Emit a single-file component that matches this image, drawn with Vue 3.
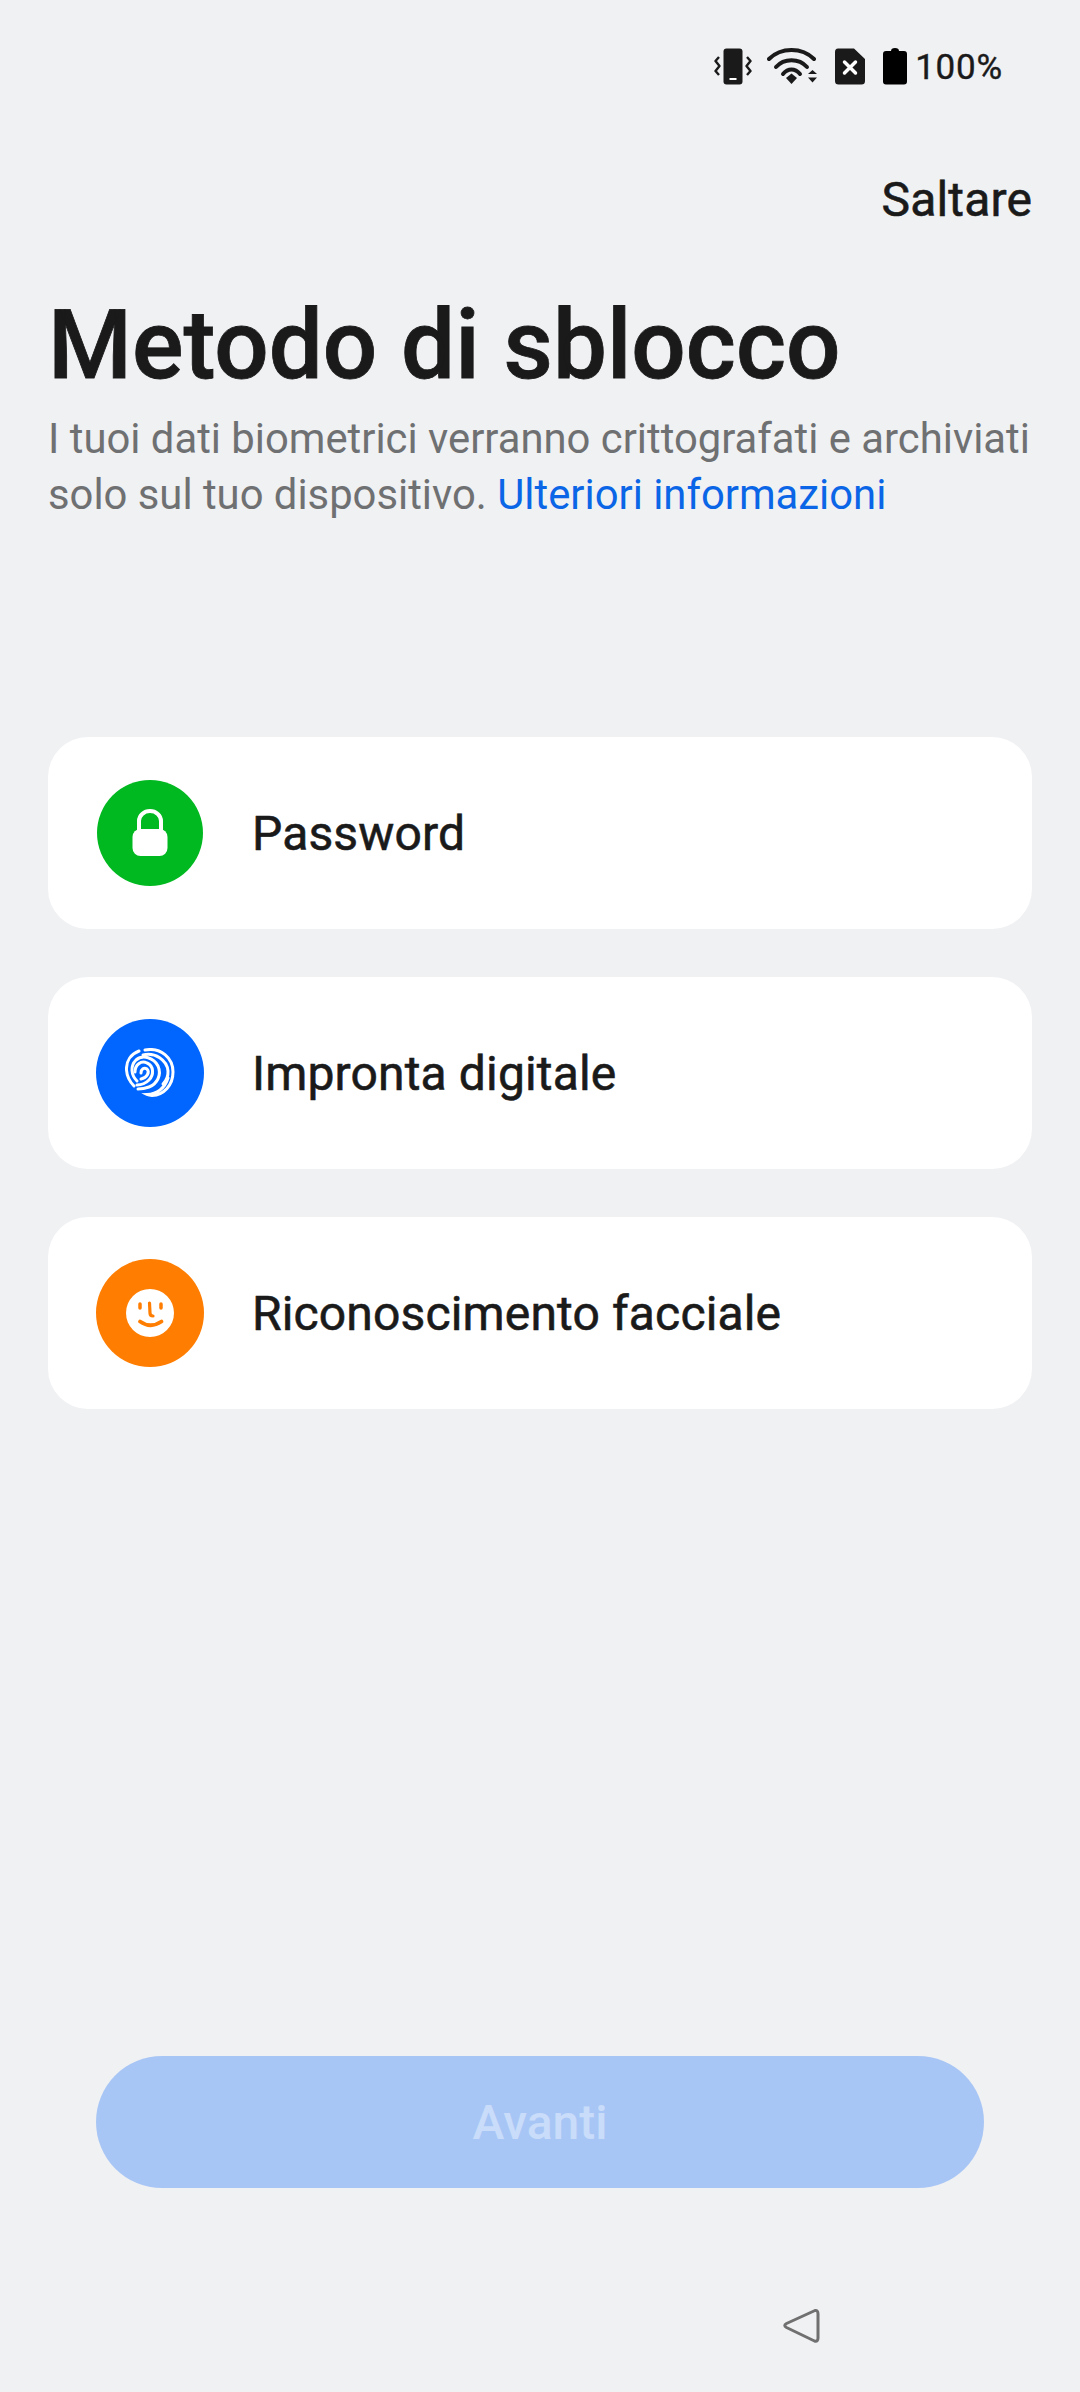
<template>
  <div class="page">
    <div class="status">
      <svg class="st" width="38" height="38" viewBox="0 0 38 38" fill="none">
        <rect x="9.500" y="0.500" width="19" height="36" rx="3" fill="#1a1a1a"/>
        <rect x="15.500" y="30" width="7" height="2" fill="#fff"/>
        <path d="M5 9 L1.500 13 L5.500 18 L1.500 23 L5 27" stroke="#1a1a1a" stroke-width="2.400" stroke-linejoin="round"/>
        <path d="M33 9 L36.500 13 L32.500 18 L36.500 23 L33 27" stroke="#1a1a1a" stroke-width="2.400" stroke-linejoin="round"/>
      </svg>
      <svg class="st" width="52" height="38" viewBox="0 0 52 38" fill="none">
        <path d="M2 11 C14 -1 35 -1 47 11" stroke="#1a1a1a" stroke-width="4" stroke-linecap="round"/>
        <path d="M9 19 C17 10 32 10 40 19" stroke="#1a1a1a" stroke-width="4" stroke-linecap="round"/>
        <path d="M16 26 C21 20 28 20 33 26" stroke="#1a1a1a" stroke-width="4" stroke-linecap="round"/>
        <path d="M19 30 L24.500 25.500 L30 30 L24.500 36 Z" fill="#1a1a1a"/>
        <path d="M41 26 L45.500 22 L50 26 Z M41 29.500 L50 29.500 L45.500 34.500 Z" fill="#1a1a1a"/>
      </svg>
      <svg class="st" width="30" height="38" viewBox="0 0 30 38">
        <path d="M3 0.500 H19 L30 11 V33 a3.500 3.500 0 0 1 -3.500 3.500 H3.500 A3.500 3.500 0 0 1 0 33 V4 A3.500 3.500 0 0 1 3 0.500 Z" fill="#1a1a1a"/>
        <path d="M9.500 14 L20.500 25 M20.500 14 L9.500 25" stroke="#fff" stroke-width="3.500" stroke-linecap="round"/>
      </svg>
      <svg class="st" width="24" height="38" viewBox="0 0 24 38">
        <path d="M8 3 Q8 0 12 0 Q16 0 16 3 H21 a3 3 0 0 1 3 3 V33.500 a3 3 0 0 1 -3 3 H3 a3 3 0 0 1 -3 -3 V6 a3 3 0 0 1 3 -3 Z" fill="#000"/>
      </svg>
      <span class="pct">100%</span>
    </div>
    <div class="skip">Saltare</div>
    <h1 class="title">Metodo di sblocco</h1>
    <p class="desc">I tuoi dati biometrici verranno crittografati e archiviati<br>solo sul tuo dispositivo. <span class="link">Ulteriori informazioni</span></p>

    <div class="list">
      <div class="card">
        <div class="ic green">
          <svg width="36" height="48" viewBox="0 0 36 48" fill="none">
            <path d="M7 24 V12 a11 10 0 0 1 22 0 V24" stroke="#fff" stroke-width="4"/>
            <rect x="0.500" y="20" width="35" height="27" rx="8" fill="#fff"/>
          </svg>
        </div>
        <span>Password</span>
      </div>
      <div class="card">
        <div class="ic blue">
          <svg width="50" height="50" viewBox="0 0 50 50" fill="none" stroke="#fff" stroke-width="3" stroke-linecap="round">
            <path d="M20 2 C36 -1 48 10 48 24 C48 37 39 47 27 47.500 C24.500 47.500 23 47 22 46.500 C32 46 40 40 43 30"/>
            <path d="M14 3 C6 6 1 13 1.500 22 C2 29 5 34 9 38"/>
            <path d="M18 7 C30 4 42 12 43 23 C43.300 28 41 33 38 36"/>
            <path d="M12 33 C6 27 5 18 11 12 C18 6 29 10 33 18 C37 27 32 36 24 39 C20 40.500 16 41 13 41"/>
            <path d="M10 24 C10 17 16 12 22 15 C29 18 29 27 24 32 C21 35 16 37 12 37"/>
            <path d="M16 25 C16 21 19 19 22 21 C25 24 22 30 16 31"/>
          </svg>
        </div>
        <span>Impronta digitale</span>
      </div>
      <div class="card">
        <div class="ic orange">
          <svg width="48" height="48" viewBox="0 0 48 48" fill="none">
            <circle cx="24" cy="24" r="24" fill="#fff"/>
            <g stroke="#ff7d00" stroke-linecap="round">
              <path d="M14 15 V19" stroke-width="3.500"/>
              <path d="M35 15 V19" stroke-width="3.500"/>
              <path d="M23.500 14 L24 24 Q24 27 27 27" stroke-width="3.200"/>
              <path d="M14 32.500 Q24.500 40 35.500 32.500" stroke-width="3.800"/>
            </g>
          </svg>
        </div>
        <span>Riconoscimento facciale</span>
      </div>
    </div>

    <div class="spacer"></div>
    <div class="btn"><span>Avanti</span></div>
    <div class="nav">
      <svg width="38" height="36" viewBox="0 0 38 36" fill="none">
        <path d="M33 2.500 Q36 2 36 6 V30 Q36 34 32.500 33 L4.500 19.500 Q1 17.500 4.500 15.500 Z" stroke="#707070" stroke-width="3" stroke-linejoin="round"/>
      </svg>
    </div>
  </div>
</template>

<script setup>
</script>

<style>
html, body { margin: 0; background: #f0f1f3; }
</style>

<style scoped>
.page {
  width: 1080px;
  height: 2392px;
  background: #f0f1f3;
  font-family: Roboto, "Liberation Sans", sans-serif;
  color: #1a1a1a;
  display: flex;
  flex-direction: column;
  box-sizing: border-box;
  overflow: hidden;
}
.status {
  display: flex;
  justify-content: flex-end;
  align-items: center;
  height: 38px;
  margin-top: 48px;
  padding-right: 77px;
}
.st { flex: none; }
.st:nth-child(1) { margin-right: 15px; }
.st:nth-child(2) { margin-right: 16px; }
.st:nth-child(3) { margin-right: 18px; }
.st:nth-child(4) { margin-right: 8px; }
.pct { font-size: 35px; font-weight: 400; letter-spacing: 0.8px; line-height: 38px; margin-top: 2px; -webkit-text-stroke: 0.4px #1a1a1a; }
.skip {
  align-self: flex-end;
  margin: 87px 48px 0 0;
  font-size: 48px;
  font-weight: 400;
  line-height: 54px;
  letter-spacing: 0.15px;
  -webkit-text-stroke: 0.6px #1a1a1a;
}
.title {
  margin: 60px 0 0 48px;
  font-size: 96px;
  font-weight: 500;
  line-height: 116px;
  -webkit-text-stroke: 0.8px #1a1a1a;
}
.desc {
  margin: 8px 0 0 48px;
  font-size: 41.8px;
  line-height: 56px;
  color: #6f7072;
}
.link { color: #0a66e6; }
.list {
  margin: 214px 48px 0 48px;
  display: flex;
  flex-direction: column;
  gap: 48px;
}
.card {
  height: 192px;
  background: #fff;
  border-radius: 40px;
  display: flex;
  align-items: center;
  padding-left: 48px;
  font-size: 48px;
  font-weight: 400;
  letter-spacing: 0.15px;
  -webkit-text-stroke: 0.6px #1a1a1a;
}
.ic {
  width: 108px;
  height: 108px;
  border-radius: 50%;
  margin-right: 48px;
  display: flex;
  align-items: center;
  justify-content: center;
  flex: none;
}
.green { background: #00b81f; width: 106px; height: 106px; margin: 0 49px 0 1px; }
.blue { background: #0066ff; }
.orange { background: #ff7d00; }
.spacer { flex: 1; }
.btn {
  margin: 0 96px;
  height: 132px;
  border-radius: 66px;
  background: #a8c6f5;
  color: #c9dcf9;
  display: flex;
  align-items: center;
  justify-content: center;
  font-size: 48px;
  font-weight: 500;
}
.nav {
  height: 204px;
  display: flex;
  justify-content: flex-end;
  align-items: flex-start;
  padding: 120px 260px 0 0;
  box-sizing: border-box;
}
</style>
